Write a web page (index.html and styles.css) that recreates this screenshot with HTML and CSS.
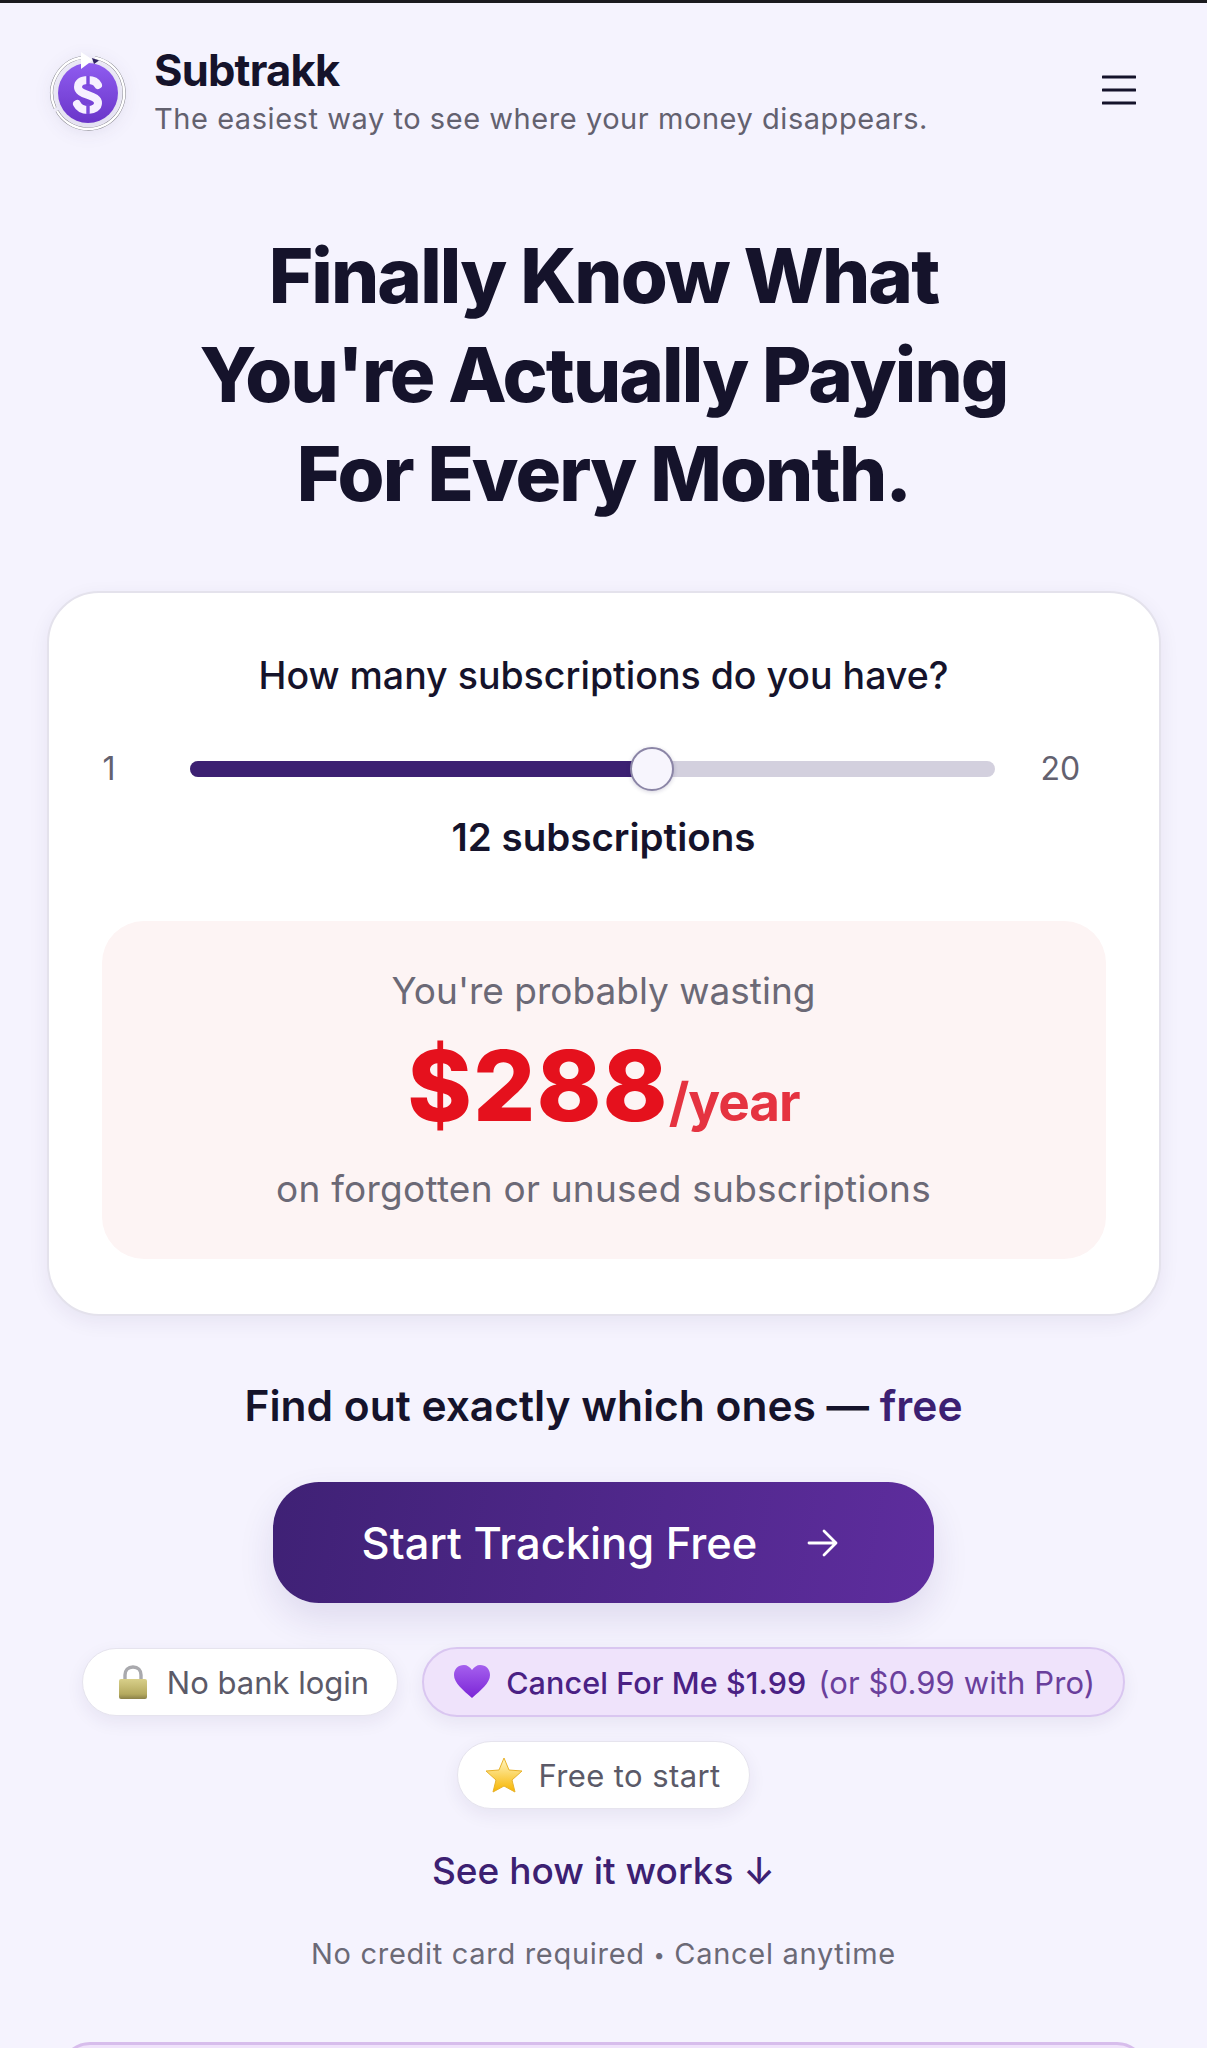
FILE: index.html
```html
<!DOCTYPE html>
<html>

<head>
  <meta charset="utf-8">
  <meta name="viewport" content="width=device-width">
  <title>Subtrakk</title>
  <link rel="stylesheet" href="styles.css">
</head>

<body>
  <header class="topbar">
    <div class="brand">
      <svg class="logo" viewBox="0 0 80 80">
        <defs>
          <linearGradient id="logo-fill" x1="0" y1="0" x2="0" y2="1">
            <stop offset="0" stop-color="#8f5cf0"/>
            <stop offset="1" stop-color="#6a35c9"/>
          </linearGradient>
        </defs>
        <circle cx="40" cy="41" r="30" fill="url(#logo-fill)"/>
        <path d="M7 56A36 36 0 0 1 34 5.5M47 5.7A36 36 0 1 1 9 59" fill="none" stroke="#77777f" stroke-width="3.2"/>
        <path d="M7 56A36 36 0 0 1 34 5.5M47 5.7A36 36 0 1 1 9 59" fill="none" stroke="#fff" stroke-width="2.4"/>
        <path d="M33 0L45 8L33 17Z" fill="#fff"/>
        <path d="M44 6L51 8.500L46 12Z" fill="#2d2060"/>
        <path d="M50 33C48 29 45 28 40 28C33 28 30 31 30 35C30 39 34 41 40 43C46 45 50 47 50 51C50 55 46 58 40 58C35 58 31 56 29 52" fill="none" stroke="#f6f0ff" stroke-width="8" stroke-linecap="round"/>
        <path d="M40 24V34M40 52V62" stroke="#7a48dc" stroke-width="3.4"/>
      </svg>
      <div class="brand-text">
        <div class="brand-name">Subtrakk</div>
        <div class="brand-tag">The easiest way to see where your money disappears.</div>
      </div>
    </div>
    <svg class="menu" viewBox="0 0 34 30">
      <path d="M1 2H33M1 15H33M1 28H33" stroke="#15132b" stroke-width="3" stroke-linecap="round"/>
    </svg>
  </header>

  <h1 class="headline">Finally Know What<br>You're Actually Paying<br>For Every Month.</h1>

  <section class="card">
    <div class="question">How many subscriptions do you have?</div>
    <div class="slider-row">
      <span class="slider-end">1</span>
      <div class="track">
        <div class="track-fill" style="width: 57.5%"></div>
        <div class="thumb" style="left: 57.5%"></div>
      </div>
      <span class="slider-end">20</span>
    </div>
    <div class="count">12 subscriptions</div>
    <div class="waste">
      <div class="waste-line">You're probably wasting</div>
      <div class="waste-amount">$288<span class="per-year">/year</span></div>
      <div class="waste-line waste-note">on forgotten or unused subscriptions</div>
    </div>
  </section>

  <p class="find-out">Find out exactly which ones — <span class="free">free</span></p>

  <a class="cta" href="#">
    <span>Start Tracking Free</span>
    <svg class="cta-arrow" viewBox="0 0 32 30">
      <path d="M2 15H29M17 3L29 15L17 27" fill="none" stroke="#fff" stroke-width="2.8" stroke-linecap="round" stroke-linejoin="round"/>
    </svg>
  </a>

  <div class="chips">
    <div class="chip chip-lock">
      <svg class="chip-icon" viewBox="0 0 30 36">
        <defs>
          <linearGradient id="lock-body" x1="0" y1="0" x2="0" y2="1">
            <stop offset="0" stop-color="#d8cf8a"/>
            <stop offset="0.75" stop-color="#b5aa5f"/>
            <stop offset="1" stop-color="#8b8148"/>
          </linearGradient>
        </defs>
        <path d="M7 17V11C7 6 10 3 15 3C20 3 23 6 23 11V17" fill="none" stroke="#a9a9ad" stroke-width="3.4"/>
        <rect x="1" y="15" width="28" height="20" rx="2" fill="url(#lock-body)"/>
      </svg>
      <span>No bank login</span>
    </div>
    <div class="chip chip-purple">
      <svg class="chip-icon" viewBox="0 0 36 34">
        <defs>
          <linearGradient id="heart-fill" x1="0" y1="0" x2="0" y2="1">
            <stop offset="0" stop-color="#a560ee"/>
            <stop offset="1" stop-color="#7b25d6"/>
          </linearGradient>
        </defs>
        <path d="M18 33C9 25 0 18 0 10C0 4 4 0 10 0C13 0 16 2 18 5C20 2 23 0 26 0C32 0 36 4 36 10C36 18 27 25 18 33Z" fill="url(#heart-fill)"/>
      </svg>
      <span class="chip-main">Cancel For Me $1.99</span>
      <span class="chip-note">(or $0.99 with Pro)</span>
    </div>
    <div class="chip">
      <svg class="chip-icon" viewBox="0 0 36 36">
        <defs>
          <linearGradient id="star-fill" x1="0" y1="0" x2="0" y2="1">
            <stop offset="0" stop-color="#fff6c4"/>
            <stop offset="1" stop-color="#f7b500"/>
          </linearGradient>
        </defs>
        <path d="M18 1L23 13L36 14L26 23L29 35L18 29L7 35L10 23L0 14L13 13Z" fill="url(#star-fill)" stroke="#e8b22a" stroke-width="1" stroke-linejoin="round"/>
      </svg>
      <span>Free to start</span>
    </div>
  </div>

  <a class="how" href="#">See how it works ↓</a>
  <p class="fine">No credit card required <span class="dot">•</span> Cancel anytime</p>
  <div class="next-clip">
    <div class="next-card"></div>
  </div>
</body>

</html>
```

FILE: styles.css
```css
html,
body {
  margin: 0;
  height: 2048px;
  overflow: hidden;
}

body {
  display: flex;
  flex-direction: column;
  align-items: center;
  background: #f5f3fe;
  border-top: 3px solid #1a1a1e;
  box-sizing: border-box;
  font-family: Inter, "Liberation Sans", sans-serif;
  color: #15132b;
}

body > * {
  flex-shrink: 0;
}

.topbar {
  width: 100%;
  box-sizing: border-box;
  padding: 42px 71px 0 48px;
  display: flex;
  justify-content: space-between;
  align-items: center;
}

.brand {
  display: flex;
  align-items: center;
  gap: 26px;
}

.logo {
  width: 80px;
  height: 80px;
  filter: drop-shadow(0 3px 8px rgba(40, 30, 90, 0.12));
}

.brand-name {
  margin-bottom: 5px;
  font-size: 43.5px;
  line-height: 50px;
  font-weight: 700;
  letter-spacing: -0.8px;
}

.brand-tag {
  font-size: 29px;
  line-height: 38px;
  color: #63616f;
  letter-spacing: 0.55px;
}

.menu {
  width: 34px;
  height: 30px;
  margin-bottom: 4px;
}

.headline {
  margin: 88px 0 0;
  font-size: 76px;
  line-height: 99px;
  font-weight: 800;
  letter-spacing: -1.9px;
  text-align: center;
}

.card {
  margin-top: 68px;
  width: 1114px;
  height: 725px;
  box-sizing: border-box;
  padding: 60px 55px 0;
  background: #fff;
  border: 2px solid #e4e2ec;
  border-radius: 52px;
  box-shadow: 0 6px 20px rgba(40, 30, 90, 0.07);
  display: flex;
  flex-direction: column;
  align-items: center;
}

.question {
  font-size: 37.5px;
  line-height: 46px;
  font-weight: 500;
}

.slider-row {
  margin: 50px 0 0 -1px;
  width: 976px;
  align-self: flex-start;
  display: flex;
  align-items: center;
}

.slider-end {
  width: 87px;
  font-size: 32px;
  line-height: 40px;
  color: #63616f;
}

.slider-end:last-child {
  width: 38px;
  margin-left: auto;
  text-align: right;
}

.track {
  position: relative;
  width: 805px;
  height: 16px;
  border-radius: 8px;
  background: #d3d0de;
}

.track-fill {
  height: 100%;
  border-radius: 8px 0 0 8px;
  background: #3c2072;
}

.thumb {
  position: absolute;
  top: -14px;
  width: 44px;
  height: 44px;
  margin-left: -22px;
  box-sizing: border-box;
  border-radius: 50%;
  background: #f7f5fd;
  border: 2.5px solid #8b85a6;
  box-shadow: 0 1px 4px rgba(40, 30, 90, 0.2);
}

.count {
  margin-top: 25px;
  font-size: 38.5px;
  line-height: 46px;
  font-weight: 600;
}

.waste {
  margin-top: 61px;
  width: 1004px;
  height: 338px;
  box-sizing: border-box;
  padding-top: 46px;
  background: #fdf4f4;
  border-radius: 42px;
  text-align: center;
}

.waste-line {
  font-size: 37px;
  line-height: 48px;
  color: #6b6976;
}

.waste-note {
  letter-spacing: 0.25px;
}

.waste-amount {
  margin: 14px 0 6px;
  font-size: 98px;
  line-height: 114px;
  font-weight: 800;
  letter-spacing: 1px;
  color: #e5111d;
}

.per-year {
  font-size: 53px;
  letter-spacing: -1px;
  font-weight: 700;
  color: #e53340;
}

.find-out {
  margin: 64px 0 0;
  font-size: 42.5px;
  line-height: 52px;
  font-weight: 600;
}

.free {
  color: #3c2072;
}

.cta {
  margin-top: 50px;
  width: 661px;
  height: 121px;
  box-sizing: border-box;
  padding-right: 6px;
  border-radius: 46px;
  display: flex;
  align-items: center;
  justify-content: center;
  gap: 50px;
  background: linear-gradient(100deg, #3f2175, #5e2d9e);
  box-shadow: 0 16px 36px rgba(50, 30, 110, 0.11);
  color: #fff;
  font-size: 43.5px;
  font-weight: 500;
  text-decoration: none;
}

.cta-arrow {
  width: 32px;
  height: 30px;
}

.chips {
  margin-top: 44px;
  width: 1100px;
  display: flex;
  flex-wrap: wrap;
  justify-content: center;
  align-items: center;
  gap: 24px;
}

.chip {
  height: 66px;
  padding: 0 28px;
  border-radius: 34px;
  display: flex;
  align-items: center;
  gap: 16px;
  background: #fff;
  border: 1px solid #e6e4ee;
  box-shadow: 0 6px 18px rgba(40, 30, 90, 0.07);
  font-size: 31px;
  color: #5b5a68;
  letter-spacing: 0.4px;
}

.chip-lock {
  padding-left: 32px;
  letter-spacing: 0;
}

.chip-purple {
  padding: 0 28px 0 30px;
  background: #efe3fb;
  border: 2px solid #d9c6f0;
  border-radius: 35px;
  color: #4a2184;
  letter-spacing: 0.1px;
}

.chip-main {
  font-size: 30.5px;
  font-weight: 500;
}

.chip-note {
  font-size: 31px;
  color: #6a3f9c;
  margin-left: -4px;
}

.chip-icon {
  width: 36px;
  height: 36px;
}

.how {
  margin-top: 38px;
  font-size: 37px;
  line-height: 48px;
  font-weight: 500;
  color: #3c2072;
  text-decoration: none;
}

.fine {
  margin: 40px 0 0;
  font-size: 29px;
  line-height: 38px;
  color: #6b6976;
  letter-spacing: 0.7px;
}

.dot {
  font-size: 20px;
  vertical-align: 2px;
}

.next-clip {
  margin-top: 68px;
  width: 1087px;
  height: 6px;
  overflow: hidden;
}

.next-card {
  height: 60px;
  box-sizing: border-box;
  background: #f0e3fb;
  border: 3px solid #d7bdec;
  border-radius: 30px;
}
```
